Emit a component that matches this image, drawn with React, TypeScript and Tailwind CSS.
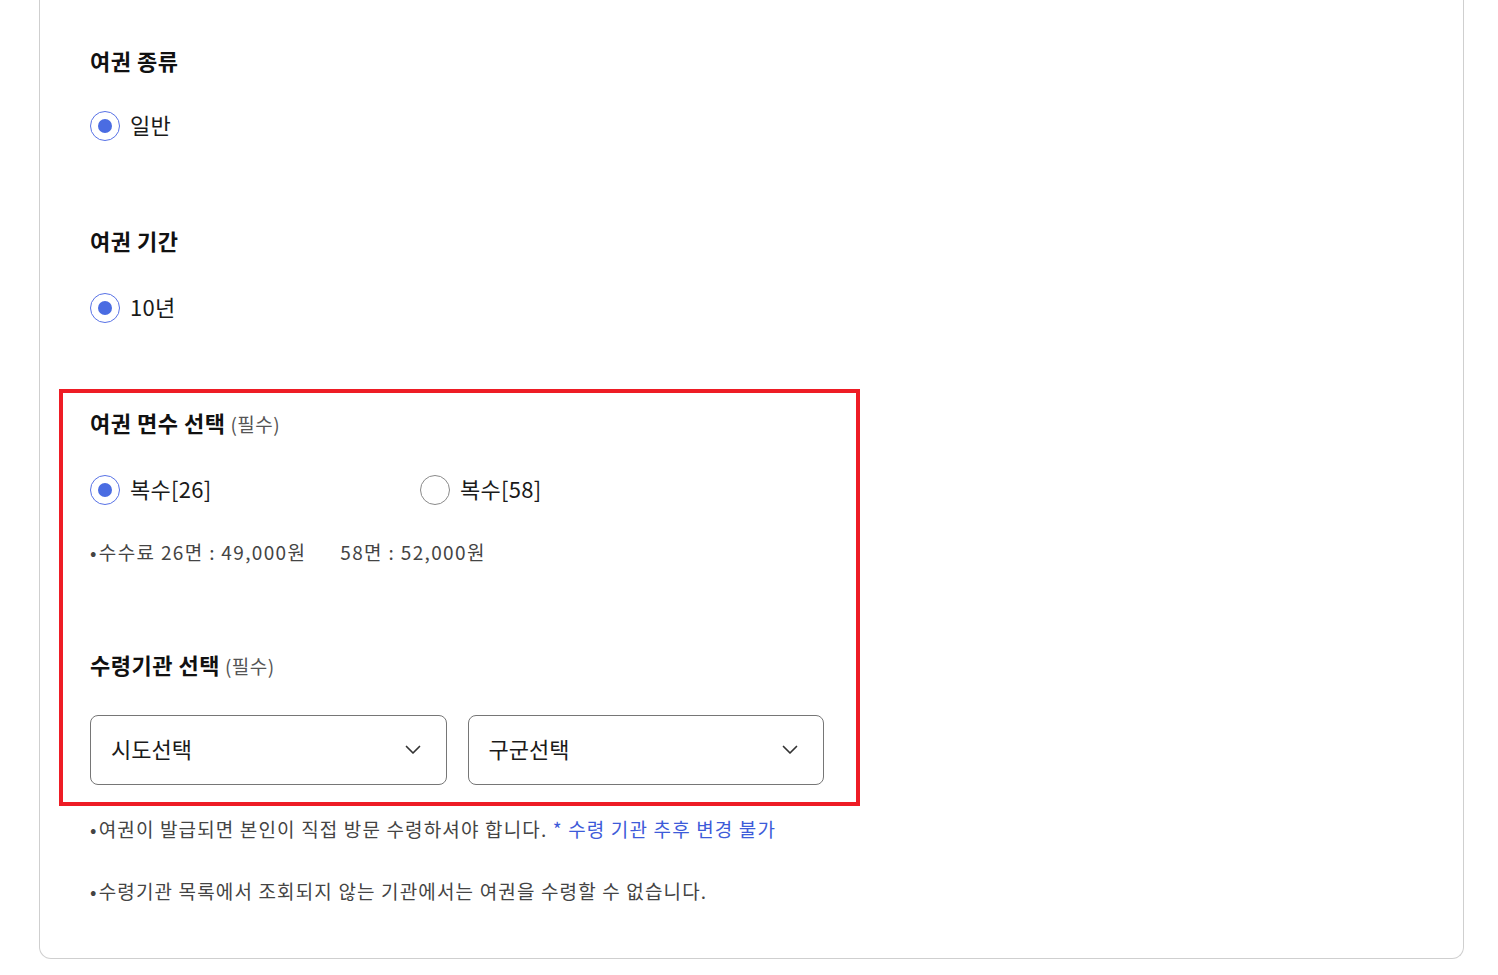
import React from 'react';

const FONT = { fontFamily: '"Noto Sans CJK KR", "Noto Sans", sans-serif' };

function Radio({ label, checked = false }: { label: string; checked?: boolean }) {
  return (
    <label className="flex items-center gap-[10px] h-[30px] cursor-pointer">
      <span
        className={`flex items-center justify-center w-[30px] h-[30px] rounded-full border-[1.5px] bg-white ${
          checked ? 'border-[#5872e6]' : 'border-[#8a8a8a]'
        }`}
      >
        {checked && <span className="w-[14px] h-[14px] rounded-full bg-[#4a6ce2]" />}
      </span>
      <span className="h-[30px] pb-[4px] text-[22px] leading-[26px] tracking-[0.3px] text-[#1a1a1a]">
        {label}
      </span>
    </label>
  );
}

function SelectBox({ placeholder }: { placeholder: string }) {
  return (
    <div className="flex-1 h-[70px] rounded-[8px] border border-[#767676] bg-white flex items-center justify-between pl-[20px] pr-[25px]">
      <span className="pb-[3px] text-[22px] text-[#1a1a1a]">{placeholder}</span>
      <svg width="16" height="10" viewBox="0 0 16 10" fill="none">
        <path d="M1.5 1.5L8 8L14.5 1.5" stroke="#333" strokeWidth="1.7" strokeLinecap="round" strokeLinejoin="round" />
      </svg>
    </div>
  );
}

function Heading({ title, required = false }: { title: string; required?: boolean }) {
  return (
    <h3 className="h-[30px] leading-[26px] text-[22px] tracking-[0.5px] font-bold text-[#111]">
      {title}
      {required && (
        <span className="ml-[5px] text-[19px] tracking-[0.5px] font-normal text-[#555]">(필수)</span>
      )}
    </h3>
  );
}

export default function App() {
  return (
    <div className="min-h-[975px] bg-white" style={FONT}>
      <div className="mx-[39px] w-[1425px] border-x border-b border-[#cfcfcf] rounded-b-[12px] pl-[50px] pt-[47px] pb-[53px]">
        {/* 여권 종류 */}
        <Heading title="여권 종류" />
        <div className="mt-[34px]">
          <Radio label="일반" checked />
        </div>

        {/* 여권 기간 */}
        <div className="mt-[86px]">
          <Heading title="여권 기간" />
        </div>
        <div className="mt-[36px]">
          <Radio label="10년" checked />
        </div>

        {/* 면수 / 수령기관 */}
        <div className="mt-[66px] ml-[-31px] w-[801px] border-4 border-[#ee1c25] pl-[27px] pr-[32px] pt-[16px] pb-[17px]">
          <Heading title="여권 면수 선택" required />
          <div className="mt-[36px] flex items-center">
            <div className="w-[330px]">
              <Radio label="복수[26]" checked />
            </div>
            <Radio label="복수[58]" />
          </div>
          <p className="mt-[35px] h-[26px] leading-[24px] text-[19px] tracking-[1.35px] text-[#444]">
            <span className="mr-[1px]">•</span>수수료 26면 : 49,000원
            <span className="ml-[34px]">58면 : 52,000원</span>
          </p>

          <div className="mt-[85px]">
            <Heading title="수령기관 선택" required />
          </div>
          <div className="mt-[34px] flex gap-[21px]">
            <SelectBox placeholder="시도선택" />
            <SelectBox placeholder="구군선택" />
          </div>
        </div>

        <p className="mt-[11px] h-[26px] leading-[24px] text-[19px] tracking-[1.15px] text-[#444]">
          <span className="mr-[1px]">•</span>여권이 발급되면 본인이 직접 방문 수령하셔야 합니다.{' '}
          <span className="text-[#3d5bd9]">* 수령 기관 추후 변경 불가</span>
        </p>
        <p className="mt-[36px] h-[26px] leading-[24px] text-[19px] tracking-[1.15px] text-[#444]">
          <span className="mr-[1px]">•</span>수령기관 목록에서 조회되지 않는 기관에서는 여권을 수령할 수 없습니다.
        </p>
      </div>
    </div>
  );
}
